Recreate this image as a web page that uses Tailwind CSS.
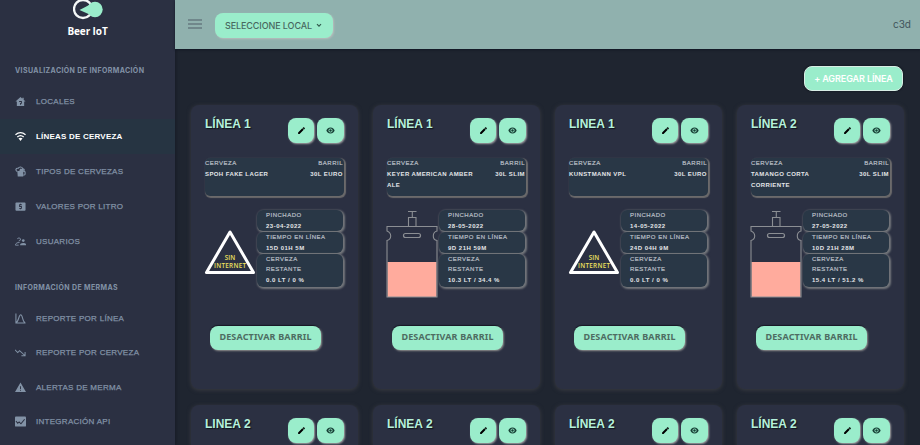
<!DOCTYPE html>
<html lang="es">
<head>
<meta charset="utf-8">
<title>Beer IoT</title>
<script src="https://cdn.jsdelivr.net/npm/@tailwindcss/browser@4"></script>
</head>
<body class="w-[920px] h-[445px] overflow-hidden bg-[#1f2530] font-['Liberation_Sans',Arial,sans-serif]">
<svg class="hidden">
  <symbol id="pencil" viewBox="0 0 24 24"><path d="M3 17.2V21h3.8L17.9 9.900l-3.800-3.800zM20.700 7c.4-.4.4-1 0-1.400l-2.300-2.300c-.4-.4-1-.4-1.400 0l-1.900 1.900 3.800 3.800z"/></symbol>
  <symbol id="eye" viewBox="0 0 24 24"><path fill-rule="evenodd" d="M12 4C6 4 2 9 1 12c1 3 5 8 11 8s10-5 11-8c-1-3-5-8-11-8zm0 2.500a5.500 5.500 0 1 1 0 11 5.500 5.500 0 0 1 0-11z"/><circle cx="12" cy="12" r="3.300"/></symbol>
  <symbol id="keg" viewBox="0 0 52 88" fill="none">
    <rect x="1.500" y="52" width="49" height="35" fill="#ffab9d"/>
    <path d="M1 87V30.500q3.700-1 3.700-4.500T1 21V16.500H51V21q-3.700 1-3.700 5t3.700 4.500V87zM22.500 16V7.500H30V16M26.300 7V1.500M22 1.500h8.500" stroke="#8b8e93" stroke-width="1.100"/>
    <rect x="17.500" y="23.500" width="17" height="4" rx="2" stroke="#8b8e93" stroke-width="1.200"/>
  </symbol>
</svg>
<div class="flex h-full">
  <aside class="w-[175px] h-full shrink-0 bg-[#2b3042] flex flex-col text-[#8292a6] shadow-[1px_0_3px_#171b26]">
    <div class="h-[49px] shrink-0 flex flex-col items-center">
      <svg class="w-8 h-5 shrink-0 ml-[3px]" viewBox="0 0 32 20"><circle cx="10" cy="9" r="9" fill="none" stroke="#f4f7f7" stroke-width="2.300"/><path d="M6.500 10 20 3v13z" fill="#9aedcb"/><circle cx="22" cy="9.500" r="7.700" fill="#9aedcb"/></svg>
      <span class="mt-[4px] leading-[14px] text-[10px] font-bold text-white font-['Open_Sans',sans-serif] tracking-[-0.1px]">Beer IoT</span>
    </div>
    <h2 class="h-[35px] shrink-0 pt-[13px] pl-[15px] leading-[17px] text-[7px] font-bold font-['Inter',sans-serif] whitespace-nowrap tracking-[0.38px]">VISUALIZACIÓN DE INFORMACIÓN</h2>
    <nav id="nav1" class="flex flex-col"></nav>
    <h2 class="h-[42.6px] shrink-0 pt-[21px] pl-[15px] leading-[17px] text-[7px] font-bold font-['Inter',sans-serif] whitespace-nowrap tracking-[0.38px]">INFORMACIÓN DE MERMAS</h2>
    <nav id="nav2" class="flex flex-col"></nav>
  </aside>
  <div class="flex-1 min-w-0">
    <header class="h-[49px] bg-[#90b1ae] flex items-center pl-[13px] pr-[9px] shadow-[0_1px_2px_#111624]">
      <svg class="w-[14px] h-[10px] mb-[2px]" viewBox="0 0 14 10" stroke="#657980" stroke-width="1.400"><path d="M0 1h14M0 5h14M0 9h14"/></svg>
      <button class="ml-[13px] mt-[2px] w-[118px] h-[25px] rounded-lg bg-[#9aedcb] text-[#48685f] flex items-center pl-[10px] shadow-[1px_1px_2px_#b9bcbc]">
        <span class="text-[9px] w-[87px] font-medium whitespace-nowrap font-['Inter',sans-serif] tracking-[-0.1px]">SELECCIONE LOCAL</span>
        <svg class="w-[6px] h-[5px] ml-[4px]" viewBox="0 0 6 5" fill="none" stroke="#315a4d" stroke-width="1.200"><path d="m1 1.200 2 2 2-2"/></svg>
      </button>
      <span class="ml-auto text-[10px] text-[#40545b] font-['Inter',sans-serif]">c3d</span>
    </header>
    <main class="pl-[16px] pt-[17px]">
      <div class="flex justify-end pr-[17px]">
        <button class="w-[99px] h-[25px] rounded-lg bg-[#9aedcb] border border-[#d8eee5] text-white text-[9px] font-semibold font-['Inter',sans-serif] whitespace-nowrap tracking-[-0.1px] shadow-[0_0_2px_#080c13]">+ AGREGAR LÍNEA</button>
      </div>
      <div id="cards" class="mt-[14px] grid grid-cols-[repeat(4,167px)] gap-x-[15px] gap-y-[16px]"></div>
    </main>
  </div>
</div>
<script>
const icons = {
  home: '<path fill="currentColor" fill-rule="evenodd" d="M12 2 1 12h3v10h16V12h3l-4-4V4h-3v2zM9 11h6v6h-2v2h-2v-4h2v-2H9z"/>',
  wifi: '<g fill="none" stroke="currentColor" stroke-width="2.800"><path d="M1 8q11-9 22 0M5 13q7-6 14 0"/></g><path fill="currentColor" d="M7.500 16q4.500-3 9 0L12 22z"/>',
  beer: '<path fill="currentColor" d="M5 11h13v12H6z"/><path fill="none" stroke="currentColor" stroke-width="2.500" d="M5 12C0 9 2 4 7 5c2-4 9-4 10 1 3 0 4 3 2 5M18 12h3q1 0 1 2v4q0 2-4 2"/><path fill="currentColor" d="M11 6h8v6H9z"/>',
  money: '<path fill="currentColor" fill-rule="evenodd" d="M3 3h18q2 0 2 2v14q0 2-2 2H3q-2 0-2-2V5q0-2 2-2zm8 3v1H9v6h4v2H9v2h2v1h2v-1h2v-6h-4V9h4V7h-2V6z"/>',
  users: '<g fill="none" stroke="currentColor" stroke-width="2"><path d="M5 6q4-4 7 0 1 4-4 5M1 20v-2q2-4 9-4M1 20h7"/></g><circle cx="18" cy="10" r="3" fill="currentColor"/><path fill="currentColor" d="M11 20q0-5 7-5t6 5z"/>',
  curve: '<path fill="none" stroke="currentColor" stroke-width="2.300" d="M2 1v21h21M2 21C8 20 8 4 12.500 4S16 20 22 21"/>',
  down: '<path fill="none" stroke="currentColor" stroke-width="2.200" d="m0 6 6 6 4-4 11 10M22 11v8h-8"/>',
  alert: '<path fill="currentColor" fill-rule="evenodd" d="M12 1 0 22h24zm-1 8h2v6h-2zm0 8h2v2h-2z"/>',
  chart: '<rect x="0" y="1" width="24" height="22" rx="2" fill="currentColor"/><path d="m2 11 4 5 3-3 4 4 8-10" fill="none" stroke="#2b3042" stroke-width="2.300"/>'
};
const item = (icon, text, active, h) => `<a class="${h} shrink-0 flex items-center pl-[15px] whitespace-nowrap ${active ? 'bg-[#263442] text-white font-bold text-[8px] tracking-[0.21px]' : 'text-[8px] font-normal tracking-[0.28px] [-webkit-text-stroke:0.25px_currentColor]'}"><svg class="w-[11px] h-[11px] mr-[10px]" viewBox="0 0 24 24">${icons[icon]}</svg><span class="pt-px">${text}</span></a>`;
const h1 = 'h-[34.9px]', h2 = 'h-[34.4px]';
document.getElementById('nav1').innerHTML = item('home','LOCALES',0,h1)+item('wifi','LÍNEAS DE CERVEZA',1,h1)+item('beer','TIPOS DE CERVEZAS',0,h1)+item('money','VALORES POR LITRO',0,h1)+item('users','USUARIOS',0,h1);
document.getElementById('nav2').innerHTML = item('curve','REPORTE POR LÍNEA',0,h2)+item('down','REPORTE POR CERVEZA',0,h2)+item('alert','ALERTAS DE MERMA',0,h2)+item('chart','INTEGRACIÓN API',0,h2);

const warning = `<svg class="w-[52px] h-[47px] mt-[19px] -ml-px" viewBox="0 0 52 47"><path d="M26 3 2.500 43.500h47z" fill="none" stroke="#fff" stroke-width="3" stroke-linejoin="round"/><g fill="#eee05f" font-family="Open Sans" font-weight="600" font-size="6.300" text-anchor="middle"><text x="26" y="31">SIN</text><text x="26" y="38.500" textLength="32">INTERNET</text></g></svg>`;
const keg = `<svg class="w-[52px] h-[88px] -ml-px"><use href="#keg"/></svg>`;
const stat = (h, label, value) => `<div class="${h} rounded-[6px] bg-[#293746] pl-[9px] shadow-[1px_1px_2px_1px_#74777c]"><p class="text-[#b8bec5] [-webkit-text-stroke:0.2px_currentColor]">${label}</p><p class="font-bold text-[#e4e6e8]">${value}</p></div>`;
const heading = title => `<div class="flex h-[42px] w-[139px]">
    <h3 class="text-[12px] leading-[17px] font-bold text-[#b5f1db] whitespace-nowrap [text-shadow:1px_1px_1px_#10131c]">${title}</h3>
    <div class="ml-auto mt-[2px] flex gap-[3px]">
      <button class="w-[26px] h-[25px] rounded-lg bg-[#9aedcb] grid place-items-center shadow-[1px_1px_2px_#a4a4a5]"><svg class="w-[9px] h-[9px]"><use href="#pencil"/></svg></button>
      <button class="w-[27px] h-[25px] rounded-lg bg-[#9aedcb] grid place-items-center shadow-[1px_1px_2px_#a4a4a5]"><svg class="w-[9px] h-[9px]" fill="#163f35"><use href="#eye"/></svg></button>
    </div>
  </div>`;
const card = c => `<article class="h-[284px] rounded-lg bg-[#2b3042] pl-[14px] pt-[11px] shadow-[0_1px_4px_#3c3d43]">
  ${heading(c[0])}
  <div class="w-[139px] h-[38px] rounded-[5px] bg-[#293746] flex justify-between text-[6px] leading-[10.8px] tracking-[0.5px] shadow-[1px_1px_1px_1px_#6b6a6b]">
    <div class="w-[95px]"><p class="text-[#b8bec5] [-webkit-text-stroke:0.2px_currentColor]">CERVEZA</p><p class="font-bold text-[#e4e6e8] tracking-[0.4px]">${c[1]}</p></div>
    <div class="text-right whitespace-nowrap pr-px"><p class="text-[#b8bec5] [-webkit-text-stroke:0.2px_currentColor]">BARRIL</p><p class="font-bold text-[#e4e6e8] tracking-[0.45px]">${c[2]}</p></div>
  </div>
  <div class="flex mt-[14px] h-[90px] w-[138px]">
    <div class="w-[52px] shrink-0">${c[6] ? keg : warning}</div>
    <div class="w-[86px] flex flex-col gap-[1px] text-[6px] leading-[10.8px] tracking-[0.5px] whitespace-nowrap">
      ${stat('h-[21px]','PINCHADO',c[3])}${stat('h-[20.500px]','TIEMPO EN LÍNEA',c[4])}${stat('h-[33px]','CERVEZA<br>RESTANTE',c[5])}
    </div>
  </div>
  <button class="ml-[5px] mt-[26px] w-[111px] h-[24px] pb-[2px] rounded-lg bg-[#9aedcb] text-[#4e6c62] text-[9px] font-bold font-['Noto_Sans',sans-serif] whitespace-nowrap tracking-[0.15px] shadow-[1px_1px_2px_#90908f,0_-1px_1px_#12121f]">DESACTIVAR BARRIL</button>
</article>`;
const nextCard = title => `<article class="h-[40px] rounded-t-lg bg-[#2b3042] pl-[14px] pt-[11px] overflow-hidden shadow-[0_1px_4px_#3c3d43]">${heading(title)}</article>`;
document.getElementById('cards').innerHTML = [
  ['LÍNEA 1','SPOH FAKE LAGER','30L EURO','23-04-2022','15D 01H 5M','0.0 LT / 0 %',0],
  ['LÍNEA 1','KEYER AMERICAN AMBER<br>ALE','30L SLIM','28-05-2022','9D 21H 59M','10.3 LT / 34.4 %',1],
  ['LINEA 1','KUNSTMANN VPL','30L EURO','14-05-2022','24D 04H 9M','0.0 LT / 0 %',0],
  ['LÍNEA 2','TAMANGO CORTA<br>CORRIENTE','30L SLIM','27-05-2022','10D 21H 28M','15.4 LT / 51.2 %',1]
].map(card).join('') + ['LINEA 2','LÍNEA 2','LÍNEA 2','LÍNEA 2'].map(nextCard).join('');
</script>
</body>
</html>
